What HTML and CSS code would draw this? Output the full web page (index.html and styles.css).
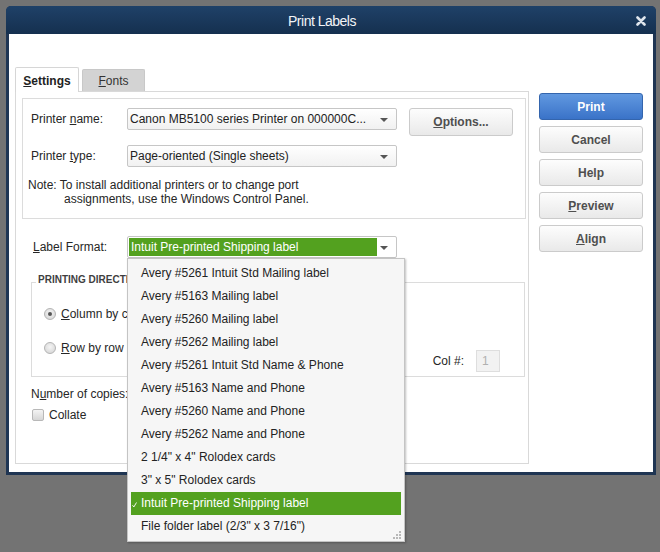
FILE: index.html
```html
<!DOCTYPE html>
<html>
<head>
<meta charset="utf-8">
<title>Print Labels</title>
<link rel="stylesheet" href="styles.css">
</head>
<body>
<div class="window">
  <div class="titlebar">
    <span class="title">Print Labels</span>
    <svg class="close" width="10" height="10" viewBox="0 0 10 10"><path d="M1.5 1.5 L8.5 8.5 M8.5 1.5 L1.5 8.5" stroke="#dfe5ec" stroke-width="2.6" stroke-linecap="round"/></svg>
  </div>
  <div class="content">
    <div class="main">
      <div class="tabs">
        <div class="tab active"><u>S</u>ettings</div>
        <div class="tab"><u>F</u>onts</div>
      </div>
      <div class="panel">
        <div class="group printer">
          <div class="row r1">
            <span class="lbl">Printer <u>n</u>ame:</span>
            <div class="select">Canon MB5100 series Printer on 000000C...<i class="arrow"></i></div>
            <button class="btn opt"><u>O</u>ptions...</button>
          </div>
          <div class="row r2">
            <span class="lbl">Printer <u>t</u>ype:</span>
            <div class="select">Page-oriented (Single sheets)<i class="arrow"></i></div>
          </div>
          <p class="note">Note: To install additional printers or to change port<br><span class="indent">assignments, use the Windows Control Panel.</span></p>
        </div>

        <div class="row format">
          <span class="lbl"><u>L</u>abel Format:</span>
          <div class="select green-select">
            <span class="green">Intuit Pre-printed Shipping label</span><i class="arrow"></i>
            <ul class="dropdown">
              <li>Avery #5261 Intuit Std Mailing label</li>
              <li>Avery #5163 Mailing label</li>
              <li>Avery #5260 Mailing label</li>
              <li>Avery #5262 Mailing label</li>
              <li>Avery #5261 Intuit Std Name &amp; Phone</li>
              <li>Avery #5163 Name and Phone</li>
              <li>Avery #5260 Name and Phone</li>
              <li>Avery #5262 Name and Phone</li>
              <li>2 1/4" x 4" Rolodex cards</li>
              <li>3" x 5" Rolodex cards</li>
              <li class="sel"><svg class="check" width="5" height="6" viewBox="0 0 5 6"><path d="M0.5 3.2 L1.8 5 L4.5 0.5" fill="none" stroke="#fff" stroke-width="0.9"/></svg>Intuit Pre-printed Shipping label</li>
              <li>File folder label (2/3" x 3 7/16")</li>
              <svg class="grip" width="9" height="9" viewBox="0 0 9 9"><g fill="#b8b8b8"><rect x="7" y="1" width="2" height="2"/><rect x="4" y="4" width="2" height="2"/><rect x="7" y="4" width="2" height="2"/><rect x="1" y="7" width="2" height="2"/><rect x="4" y="7" width="2" height="2"/><rect x="7" y="7" width="2" height="2"/></g></svg>
            </ul>
          </div>
        </div>

        <fieldset class="direction">
          <legend>PRINTING DIRECTION</legend>
          <div class="dir-body">
            <div class="radios">
              <label class="radio-row"><span class="radio checked"></span><u>C</u>olumn by column</label>
              <label class="radio-row"><span class="radio"></span><u>R</u>ow by row</label>
            </div>
            <div class="colnum">
              <span>Col #:</span>
              <span class="numbox">1</span>
            </div>
          </div>
        </fieldset>

        <div class="copies">N<u>u</u>mber of copies:</div>
        <label class="collate"><span class="checkbox"></span>Collate</label>
      </div>
    </div>
    <div class="side">
      <button class="btn primary">Print</button>
      <button class="btn">Cancel</button>
      <button class="btn">Help</button>
      <button class="btn"><u>P</u>review</button>
      <button class="btn"><u>A</u>lign</button>
    </div>
  </div>
</div>
</body>
</html>
```

FILE: styles.css
```css
html, body {
  margin: 0;
  padding: 0;
}
body {
  width: 660px;
  height: 552px;
  overflow: hidden;
  background: #737373;
  font-family: "Liberation Sans", Arial, sans-serif;
  font-size: 12px;
  color: #262626;
}
u { text-decoration: underline; text-underline-offset: 1px; }

.window {
  margin: 6px 0 0 6px;
  width: 650px;
  height: 469px;
  box-sizing: border-box;
  background: #1f3553;
  border-radius: 5px 5px 0 0;
  padding: 0 3px 3px 3px;
  display: flex;
  flex-direction: column;
}
.titlebar {
  height: 28px;
  flex: none;
  margin: 0 -3px;
  padding-right: 18px;
  border-radius: 5px 5px 0 0;
  background: linear-gradient(#1f4168, #15304f);
  display: flex;
  align-items: center;
  justify-content: center;
  position: relative;
}
.title {
  color: #f2f4f7;
  font-size: 14px;
  letter-spacing: -0.5px;
  margin-top: 1px;
}
.close {
  position: absolute;
  right: 10px;
  top: 10px;
}
.content {
  flex: 1;
  background: #fff;
  display: flex;
  padding: 33px 10px 0 6px;
}
.main {
  width: 514px;
  display: flex;
  flex-direction: column;
}
.tabs {
  display: flex;
  align-items: flex-end;
  gap: 3px;
  height: 24px;
  position: relative;
  z-index: 1;
}
.tab {
  height: 22px;
  box-sizing: border-box;
  width: 63px;
  display: flex;
  align-items: center;
  justify-content: center;
  background: #d3d3d3;
  border: 1px solid #c8c8c8;
  border-bottom: none;
  border-radius: 2px 2px 0 0;
  color: #333;
  padding-top: 1px;
}
.tab.active {
  height: 25px;
  width: 64px;
  background: #fff;
  border-color: #d6d6d6;
  font-weight: bold;
  color: #222;
  margin-bottom: -1px;
}
.panel {
  height: 373px;
  box-sizing: border-box;
  border: 1px solid #d9d9d9;
  padding: 6px 2px 0 6px;
}
.group.printer {
  border: 1px solid #dcdcdc;
  height: 121px;
  box-sizing: border-box;
  padding: 9px 0 0 8px;
}
.row {
  display: flex;
  align-items: flex-start;
}
.lbl {
  width: 96px;
  flex: none;
  line-height: 22px;
}
.select {
  width: 270px;
  height: 22px;
  box-sizing: border-box;
  border: 1px solid #c6c6c6;
  border-radius: 2px;
  background: linear-gradient(#ffffff, #f1f1f1);
  padding-left: 2px;
  line-height: 20px;
  position: relative;
  white-space: nowrap;
  color: #222;
}
.arrow {
  position: absolute;
  right: 8px;
  top: 9px;
  width: 0;
  height: 0;
  border-left: 4px solid transparent;
  border-right: 4px solid transparent;
  border-top: 4px solid #555;
}
.btn {
  font-family: "Liberation Sans", Arial, sans-serif;
  font-size: 12px;
  font-weight: bold;
  color: #4f4f4f;
  width: 104px;
  height: 27px;
  border: 1px solid #cbcbcb;
  border-radius: 3px;
  background: linear-gradient(#fdfdfd, #e9e9e9);
  padding: 0;
}
.btn.opt {
  margin-left: 12px;
  height: 28px;
}
.row.r2 {
  margin-top: 9px;
}
.note {
  margin: 11px 0 0 -3px;
  line-height: 14px;
}
.indent {
  padding-left: 36px;
}
.row.format {
  margin-top: 17px;
  padding-left: 11px;
}
.row.format .lbl {
  width: 94px;
}
.green-select {
  background: #fff;
  padding: 1px 0 0 1px;
}
.green {
  display: block;
  width: 248px;
  height: 18px;
  line-height: 18px;
  background: #53a11f;
  color: #fff;
  padding-left: 2px;
  box-sizing: border-box;
}
.dropdown {
  position: absolute;
  z-index: 5;
  left: -1px;
  top: calc(100% + 1px);
  width: 278px;
  height: 284px;
  box-sizing: border-box;
  margin: 0;
  padding: 3px 3px 0 3px;
  list-style: none;
  background: #f6f6f6;
  border: 1px solid #c4c4c4;
  box-shadow: 1px 1px 2px rgba(0,0,0,0.25);
}
.dropdown li {
  height: 23px;
  line-height: 23px;
  padding-left: 10px;
  color: #232323;
  position: relative;
}
.dropdown li.sel {
  background: #53a11f;
  color: #fff;
}
.check {
  position: absolute;
  left: 1px;
  top: 10px;
}
.grip {
  position: absolute;
  right: 3px;
  bottom: 2px;
}
.direction {
  margin: 16px 0 0 9px;
  width: 494px;
  height: 103px;
  box-sizing: border-box;
  border: 1px solid #dcdcdc;
  padding: 0;
}
.direction legend {
  margin-left: 4px;
  padding: 0 2px 5px 2px;
  font-size: 10px;
  line-height: 11px;
  font-weight: bold;
  color: #3f3f3f;
}
.dir-body {
  display: flex;
  height: 86px;
}
.radios {
  padding: 14px 0 0 12px;
  display: flex;
  flex-direction: column;
  gap: 14px;
}
.radio-row {
  display: flex;
  align-items: center;
  height: 20px;
}
.radio {
  width: 12px;
  height: 12px;
  box-sizing: border-box;
  border-radius: 50%;
  border: 1px solid #b4b4b4;
  background: radial-gradient(circle at 50% 40%, #f4f4f4, #d2d2d2);
  margin-right: 5px;
  position: relative;
}
.radio.checked::after {
  content: "";
  position: absolute;
  left: 3px;
  top: 3px;
  width: 4px;
  height: 4px;
  border-radius: 50%;
  background: #555;
}
.colnum {
  margin-left: auto;
  margin-right: 24px;
  align-self: flex-end;
  margin-bottom: 4px;
  display: flex;
  align-items: center;
}
.numbox {
  margin-left: 12px;
  width: 24px;
  height: 22px;
  box-sizing: border-box;
  border: 1px solid #dedede;
  background: #f2f2f2;
  color: #b0b0b0;
  line-height: 20px;
  padding-left: 5px;
}
.copies {
  margin: 10px 0 0 9px;
  line-height: 14px;
}
.collate {
  margin: 7px 0 0 10px;
  display: flex;
  align-items: center;
  height: 14px;
}
.checkbox {
  width: 12px;
  height: 12px;
  box-sizing: border-box;
  border: 1px solid #b8b8b8;
  border-radius: 2px;
  background: linear-gradient(#f4f4f4, #d6d6d6);
  margin-right: 5px;
}
.side {
  margin-left: 10px;
  padding-top: 26px;
  display: flex;
  flex-direction: column;
  gap: 6px;
}
.btn.primary {
  background: linear-gradient(#6198e0, #3a73c8);
  border-color: #3465ad;
  color: #fff;
}
```
